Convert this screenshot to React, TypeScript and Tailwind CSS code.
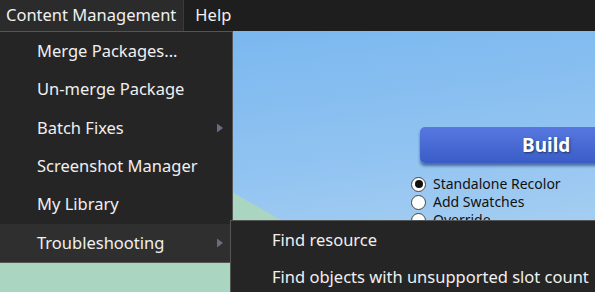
import React from "react";

const font = { fontFamily: '"Noto Sans", "Open Sans", sans-serif' };

const Arrow = () => (
  <svg width="6" height="9" viewBox="0 0 6 9" className="absolute right-[9px] top-1/2 -translate-y-1/2">
    <path d="M0 0 L6 4.5 L0 9 Z" fill="#6c6a80" />
  </svg>
);

const items = [
  { label: "Merge Packages...", sub: false },
  { label: "Un-merge Package", sub: false },
  { label: "Batch Fixes", sub: true },
  { label: "Screenshot Manager", sub: false },
  { label: "My Library", sub: false },
  { label: "Troubleshooting", sub: true, active: true },
];

const Scenery = () => (
  <svg className="absolute inset-0" width="595" height="261" viewBox="0 0 595 261" preserveAspectRatio="none">
    <defs>
      <linearGradient id="sky" x1="0" y1="0" x2="0.3" y2="1">
        <stop offset="0" stopColor="#76b5ef" />
        <stop offset="0.6" stopColor="#90c3f1" />
        <stop offset="1" stopColor="#a8cff1" />
      </linearGradient>
    </defs>
    <rect width="595" height="261" fill="url(#sky)" />
    <path d="M0 120 L232 161 L300 200 L380 261 L0 261 Z" fill="#a9d5c1" />
  </svg>
);

export default function App() {
  return (
    <div className="relative h-[292px] w-[595px] overflow-hidden bg-[#1e1e1e] text-[#f0f0f0]" style={font}>
      <div className="flex h-[31px] items-stretch bg-[#1e1e1e] text-[16.5px]">
        <div className="flex items-center border-r border-[#3a3a3a] bg-[#2b2b2b] pl-[6px] pr-[7px]">Content Management</div>
        <div className="flex items-center px-[11px]">Help</div>
      </div>

      <div className="relative h-[261px]">
        <Scenery />
        <div className="relative flex flex-col items-start pl-[411px] pt-[96px]">
          <div className="ml-[9px] flex h-[36px] w-[200px] items-center rounded-l-[5px] bg-gradient-to-b from-[#5878e0] to-[#3a5cc6] pl-[102px] text-[19px] font-bold text-white shadow-[0_3px_3px_rgba(30,50,110,0.6)] [text-shadow:1px_1px_2px_rgba(0,0,0,0.5)]">
            Build
          </div>
          <div className="mt-[12px] flex flex-col text-[14px] leading-[18px] text-[#111]">
            {["Standalone Recolor", "Add Swatches", "Override"].map((l, i) => (
              <div key={l} className="flex items-center gap-[7px]">
                <span className="flex h-[15px] w-[15px] items-center justify-center rounded-full border border-[#444] bg-white">
                  {i === 0 && <span className="h-[8px] w-[8px] rounded-full bg-[#111]" />}
                </span>
                {l}
              </div>
            ))}
          </div>
        </div>
      </div>

      <div className="absolute left-0 top-[31px] w-[233px] border border-l-0 border-[#555] bg-[#252525] text-[16.5px]">
        {items.map((it) => (
          <div
            key={it.label}
            className={`relative flex h-[38.4px] items-center pl-[37px] ${it.active ? "bg-[#2f2f2f]" : ""}`}
          >
            {it.label}
            {it.sub && <Arrow />}
          </div>
        ))}
      </div>

      <div className="absolute left-[230px] top-[220px] w-[380px] border border-[#555] bg-[#252525] pt-[1px] text-[16.5px]">
        <div className="flex h-[37px] items-center pl-[41px]">Find resource</div>
        <div className="flex h-[37px] items-center pl-[41px] whitespace-nowrap">Find objects with unsupported slot count</div>
      </div>
    </div>
  );
}
